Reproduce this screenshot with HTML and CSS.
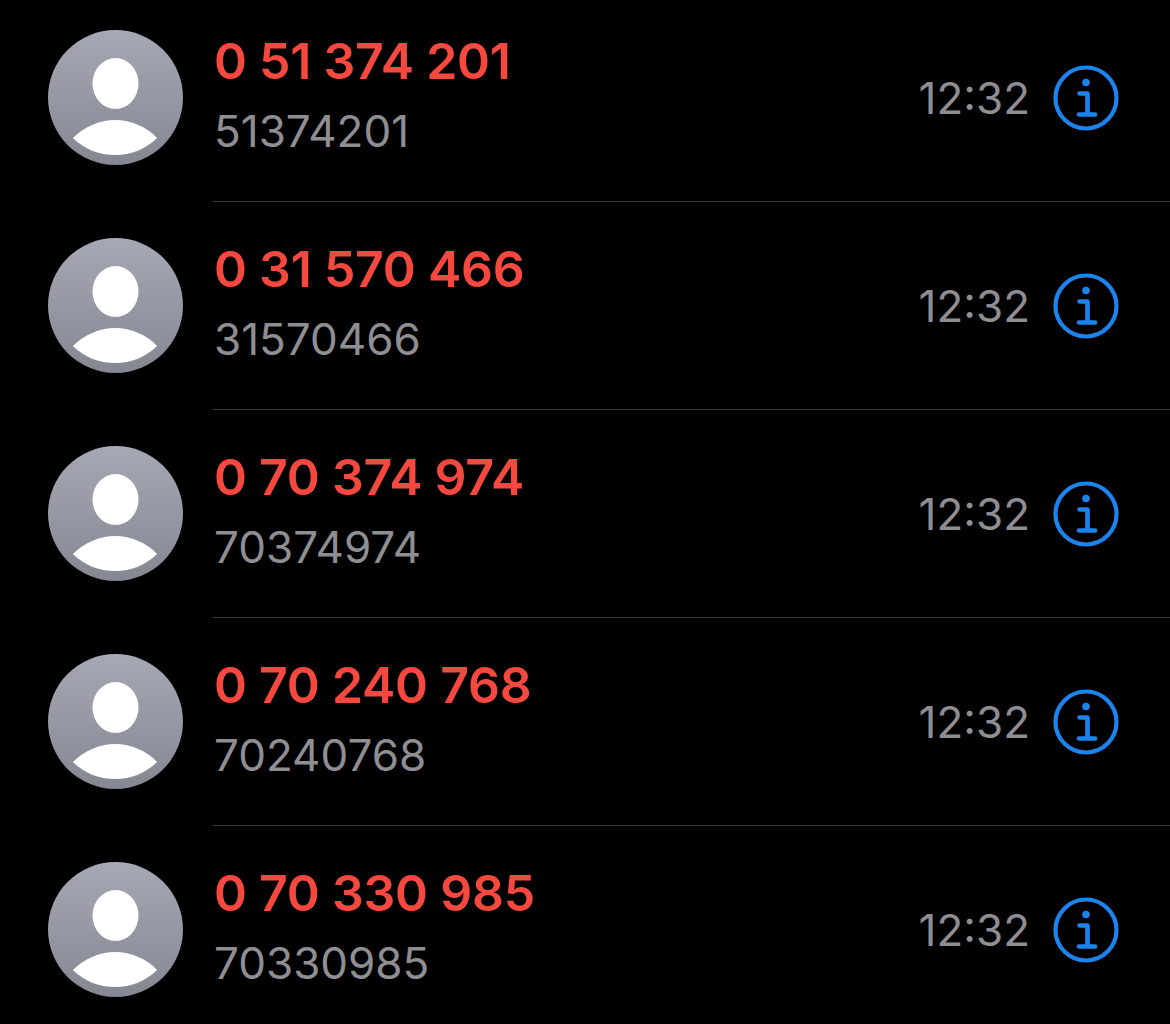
FILE: index.html
```html
<!DOCTYPE html>
<html lang="en">
<head>
<meta charset="utf-8">
<title>Recents</title>
<link rel="stylesheet" href="styles.css">
</head>
<body>
<svg class="defs" width="0" height="0" aria-hidden="true">
  <defs>
    <linearGradient id="avatar-bg" x1="0" y1="0" x2="0" y2="1">
      <stop offset="0" stop-color="#a6a9b4"/>
      <stop offset="1" stop-color="#858892"/>
    </linearGradient>
    <symbol id="avatar" viewBox="0 0 135 135">
      <circle cx="67.5" cy="67.5" r="67.5" fill="url(#avatar-bg)"/>
      <ellipse cx="67.5" cy="53.5" rx="23" ry="25.5" fill="#fff"/>
      <path d="M25 108C36 97 51 90 67 90S99 97 109 108C98 119 83 125 67 125S36 119 25 108Z" fill="#fff"/>
    </symbol>
    <symbol id="info" viewBox="0 0 66 66">
      <circle cx="33" cy="33" r="30.5" fill="none" stroke="#1c84ec" stroke-width="4.2"/>
      <circle cx="33" cy="17.5" r="3.8" fill="#1c84ec"/>
      <path d="M26.500 28.500H34.500V49M26 49.500H42" fill="none" stroke="#1c84ec" stroke-width="4.6" stroke-linecap="round" stroke-linejoin="round"/>
    </symbol>
  </defs>
</svg>
<main class="list">
  <article class="row">
    <svg class="avatar"><use href="#avatar"/></svg>
    <div class="body">
      <div class="text"><div class="title">0 51 374 201</div><div class="sub">51374201</div></div>
      <div class="time">12:32</div>
      <svg class="info"><use href="#info"/></svg>
    </div>
  </article>
  <article class="row">
    <svg class="avatar"><use href="#avatar"/></svg>
    <div class="body">
      <div class="text"><div class="title">0 31 570 466</div><div class="sub">31570466</div></div>
      <div class="time">12:32</div>
      <svg class="info"><use href="#info"/></svg>
    </div>
  </article>
  <article class="row">
    <svg class="avatar"><use href="#avatar"/></svg>
    <div class="body">
      <div class="text"><div class="title">0 70 374 974</div><div class="sub">70374974</div></div>
      <div class="time">12:32</div>
      <svg class="info"><use href="#info"/></svg>
    </div>
  </article>
  <article class="row">
    <svg class="avatar"><use href="#avatar"/></svg>
    <div class="body">
      <div class="text"><div class="title">0 70 240 768</div><div class="sub">70240768</div></div>
      <div class="time">12:32</div>
      <svg class="info"><use href="#info"/></svg>
    </div>
  </article>
  <article class="row">
    <svg class="avatar"><use href="#avatar"/></svg>
    <div class="body">
      <div class="text"><div class="title">0 70 330 985</div><div class="sub">70330985</div></div>
      <div class="time">12:32</div>
      <svg class="info"><use href="#info"/></svg>
    </div>
  </article>
</main>
</body>
</html>
```
FILE: styles.css
```css
html, body {
  margin: 0;
  height: 100%;
  background: #000;
  overflow: hidden;
}

body {
  font-family: Inter, "Liberation Sans", sans-serif;
}

.defs {
  display: block;
  height: 0;
}

.list {
  margin-top: -6px;
}

.row {
  display: flex;
  align-items: stretch;
  height: 208px;
  padding-left: 48px;
  box-sizing: border-box;
}

.avatar {
  flex: none;
  width: 135px;
  height: 135px;
  align-self: center;
  margin-right: 30px;
  margin-bottom: 2px;
}

.body {
  flex: 1;
  display: flex;
  align-items: center;
  padding-right: 51px;
  border-bottom: 1px solid #3a3a3c;
}

.text {
  flex: 1;
  padding-left: 1px;
  padding-bottom: 7px;
}

.title {
  color: #f5483f;
  font-size: 50px;
  font-weight: 640;
  line-height: 60px;
  letter-spacing: -0.25px;
  margin-bottom: 13px;
}

.sub {
  color: #8e8e93;
  font-size: 44px;
  line-height: 54px;
}

.time {
  color: #8e8e93;
  font-size: 44px;
  line-height: 54px;
  margin-right: 23px;
}

.info {
  flex: none;
  width: 66px;
  height: 66px;
}
```
